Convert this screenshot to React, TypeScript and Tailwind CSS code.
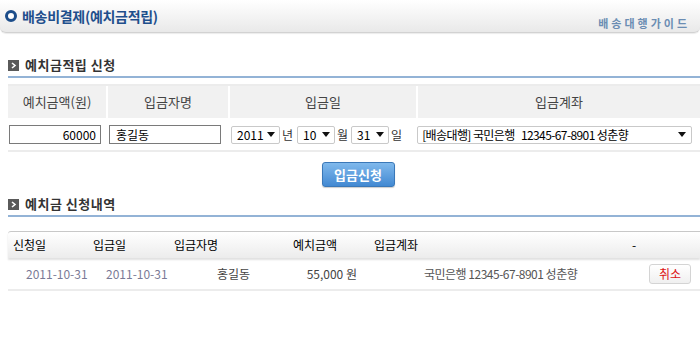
import React from "react";

const font = { fontFamily: '"Noto Sans CJK KR", "Noto Sans", sans-serif' };

const SectionTitle = ({ title }: { title: string }) => (
  <div>
    <div className="flex items-center gap-[6px] h-[14px]">
      <span className="w-[11px] h-[11px] bg-[#5a5a5a] flex items-center justify-center">
        <svg width="7" height="7" viewBox="0 0 7 7">
          <path d="M2 1 L5 3.5 L2 6" stroke="#fff" strokeWidth="1.6" fill="none" />
        </svg>
      </span>
      <span className="text-[13px] font-bold text-[#333] tracking-[0.5px]">{title}</span>
    </div>
    <div className="mt-[4px] h-[2px] bg-[#93b3d6]" />
  </div>
);

const Arrow = () => (
  <svg width="8" height="5" viewBox="0 0 8 5">
    <path d="M0 0 H8 L4 5 Z" fill="#111" />
  </svg>
);

const Select = ({ value, w }: { value: string; w: string }) => (
  <div
    className={`${w} h-[18px] border border-[#c9c9c9] rounded-[2px] bg-white flex items-center justify-between pl-[5px] pr-[4px] text-[12px] text-black`}
  >
    <span>{value}</span>
    <Arrow />
  </div>
);

export default function App() {
  return (
    <div className="w-[700px] h-[337px] bg-white overflow-hidden" style={font}>
      {/* top header */}
      <div className="h-[33px] rounded-b-[6px] border-b border-[#d2d2d2] bg-gradient-to-b from-white to-[#e9e9e9] flex items-center justify-between pl-[5px] pr-[10px] shadow-[0_1px_1px_rgba(0,0,0,0.08)]">
        <div className="flex items-center gap-[5px]">
          <span className="w-[12px] h-[12px] rounded-full border-[3px] border-[#1c4d8a] bg-white" />
          <span className="text-[14px] font-bold text-[#1f4f8c] tracking-[-0.3px]">배송비결제(예치금적립)</span>
        </div>
        <span className="text-[11px] font-bold text-[#6b8db3] tracking-[3px] mt-[14px]">배송대행가이드</span>
      </div>

      <div className="pl-[8px]">
        <div className="pt-[25px]">
          <SectionTitle title="예치금적립 신청" />
        </div>

        {/* entry table */}
        <div className="mt-[6px] border-t-[2px] border-[#ececec]">
          <div className="grid grid-cols-[100px_122px_188px_1fr] h-[32px] bg-[#f1f1f1] text-[13px] text-[#444]">
            <div className="flex items-center justify-center border-r-2 border-white">예치금액(원)</div>
            <div className="flex items-center justify-center border-r-2 border-white">입금자명</div>
            <div className="flex items-center justify-center border-r-2 border-white">입금일</div>
            <div className="flex items-center justify-center">입금계좌</div>
          </div>
          <div className="h-[1px] bg-white" />
          <div className="h-[33px] flex items-center text-[12px] border-b-[2px] border-[#ececec]">
            <div className="w-[92px] h-[19px] ml-[1px] border border-[#7a7a7a] text-right pr-[4px] leading-[17px]">60000</div>
            <div className="w-[112px] h-[19px] ml-[8px] border border-[#7a7a7a] pl-[6px] leading-[17px]">홍길동</div>
            <div className="ml-[10px] flex items-center gap-[2px]">
              <Select value="2011" w="w-[49px]" />
              <span className="text-[#333] mr-[2px]">년</span>
              <Select value="10" w="w-[38px]" />
              <span className="text-[#333] mr-[1px]">월</span>
              <Select value="31" w="w-[38px]" />
              <span className="text-[#333]">일</span>
            </div>
            <div className="ml-[15px] w-[275px] h-[18px] border border-[#c9c9c9] rounded-[2px] flex items-center justify-between pl-[4px] pr-[5px]">
              <span className="text-black tracking-[-0.6px] whitespace-pre">[배송대행] 국민은행   12345-67-8901 성춘향</span>
              <Arrow />
            </div>
          </div>
        </div>

        <div className="flex justify-center pt-[10px] pl-[8px]">
          <button className="w-[73px] h-[25px] rounded-[3px] border border-[#3a78b8] bg-gradient-to-b from-[#80b9ec] to-[#4289d2] text-white text-[13px] font-bold shadow-[0_1px_1px_rgba(0,0,0,0.2)]">
            입금신청
          </button>
        </div>

        <div className="pt-[10px]">
          <SectionTitle title="예치금 신청내역" />
        </div>

        {/* history list */}
        <div className="mt-[14px]">
          <div className="h-[27px] border-t border-[#c8c8c8] rounded-tl-[3px] bg-gradient-to-b from-white to-[#ececec] shadow-[0_2px_2px_rgba(0,0,0,0.12)] flex items-center text-[12px] text-black">
            <span className="w-[85px] pl-[5px]">신청일</span>
            <span className="w-[81px]">입금일</span>
            <span className="w-[119px]">입금자명</span>
            <span className="w-[81px]">예치금액</span>
            <span className="w-[258px]">입금계좌</span>
            <span>-</span>
          </div>
          <div className="h-[33px] flex items-center text-[12px] border-b-[2px] border-[#ececec]">
            <span className="w-[80px] shrink-0 pl-[18px] text-[#7a7a96]">2011-10-31</span>
            <span className="w-[80px] shrink-0 pl-[18px] text-[#7a7a96]">2011-10-31</span>
            <span className="w-[75px] shrink-0 pl-[49px] text-[#444] whitespace-nowrap">홍길동</span>
            <span className="w-[114px] shrink-0 text-[#444] text-right">55,000 원</span>
            <span className="ml-[67px] shrink-0 text-[#555] tracking-[-0.5px] whitespace-nowrap">국민은행 12345-67-8901 성춘향</span>
            <button className="ml-auto mr-[9px] w-[42px] h-[20px] shrink-0 rounded-[3px] border border-[#d4d4d4] bg-gradient-to-b from-white to-[#f0f0f0] text-[#d11] text-[12px]">
              취소
            </button>
          </div>
        </div>
      </div>
    </div>
  );
}
